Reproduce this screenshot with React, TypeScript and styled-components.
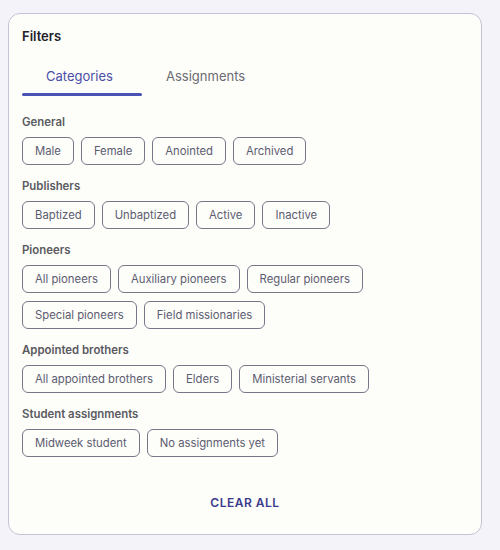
import React, { FC } from 'react'
import styled, { createGlobalStyle } from 'styled-components'

const GlobalStyle = createGlobalStyle`
	html, body {
		margin: 0;
		padding: 0;
		background: #f3f3f9;
	}
	body {
		font-family: Inter, 'Noto Sans', sans-serif;
	}
`

type GroupType = {
	title: string
	items: string[]
}

const groups: GroupType[] = [
	{ title: 'General', items: ['Male', 'Female', 'Anointed', 'Archived'] },
	{ title: 'Publishers', items: ['Baptized', 'Unbaptized', 'Active', 'Inactive'] },
	{
		title: 'Pioneers',
		items: [
			'All pioneers',
			'Auxiliary pioneers',
			'Regular pioneers',
			'Special pioneers',
			'Field missionaries',
		],
	},
	{
		title: 'Appointed brothers',
		items: ['All appointed brothers', 'Elders', 'Ministerial servants'],
	},
	{ title: 'Student assignments', items: ['Midweek student', 'No assignments yet'] },
]

const App: FC = () => {
	return (
		<>
			<GlobalStyle />
			<Page>
				<Card>
					<Title>{'Filters'}</Title>
					<TabBar>
						<Tab active>{'Categories'}</Tab>
						<Tab>{'Assignments'}</Tab>
					</TabBar>
					<Groups>
						{groups.map((group) => (
							<Group key={group.title}>
								<GroupTitle>{group.title}</GroupTitle>
								<Chips>
									{group.items.map((item) => (
										<Chip key={item}>{item}</Chip>
									))}
								</Chips>
							</Group>
						))}
					</Groups>
					<Footer>
						<ClearButton>{'CLEAR ALL'}</ClearButton>
					</Footer>
				</Card>
			</Page>
		</>
	)
}

const Page = styled.div`
	padding: 13px 0 0 8px;
`

const Card = styled.div`
	box-sizing: border-box;
	width: 474px;
	height: 522px;
	background: #fdfdfa;
	border: 1px solid #c3c3d6;
	border-radius: 12px;
	padding: 14px 13px 0;
	display: flex;
	flex-direction: column;
`

const Title = styled.div`
	font-size: 13px;
	line-height: 16px;
	font-weight: 600;
	color: #222228;
`

const TabBar = styled.div`
	display: flex;
`

const Tab = styled.div<{ active?: boolean }>`
	position: relative;
	width: 120px;
	box-sizing: border-box;
	padding: 22px 0 10px 24px;
	font-size: 13px;
	line-height: 20px;
	white-space: nowrap;
	color: ${({ active }) => (active ? '#4a4fa6' : '#6b6b72')};
	&::after {
		content: '';
		display: ${({ active }) => (active ? 'block' : 'none')};
		position: absolute;
		left: 0;
		right: 0;
		bottom: 0;
		height: 3px;
		border-radius: 2px;
		background: #4b52b6;
	}
`

const Groups = styled.div`
	display: flex;
	flex-direction: column;
	gap: 13px;
	margin-top: 18px;
`

const Group = styled.div`
	display: flex;
	flex-direction: column;
	gap: 7px;
`

const GroupTitle = styled.div`
	font-size: 11.4px;
	line-height: 16px;
	font-weight: 600;
	color: #5a5a60;
`

const Chips = styled.div`
	display: flex;
	flex-wrap: wrap;
	gap: 8px 7px;
`

const Chip = styled.div`
	box-sizing: border-box;
	height: 28px;
	padding: 0 12px;
	display: flex;
	align-items: center;
	border: 1px solid #77778a;
	border-radius: 6px;
	font-size: 11.3px;
	color: #5c5c70;
`

const Footer = styled.div`
	display: flex;
	justify-content: center;
	margin-top: 38px;
`

const ClearButton = styled.div`
	font-size: 12px;
	line-height: 16px;
	font-weight: 600;
	letter-spacing: 0.5px;
	color: #3b3b8c;
`

export default App
